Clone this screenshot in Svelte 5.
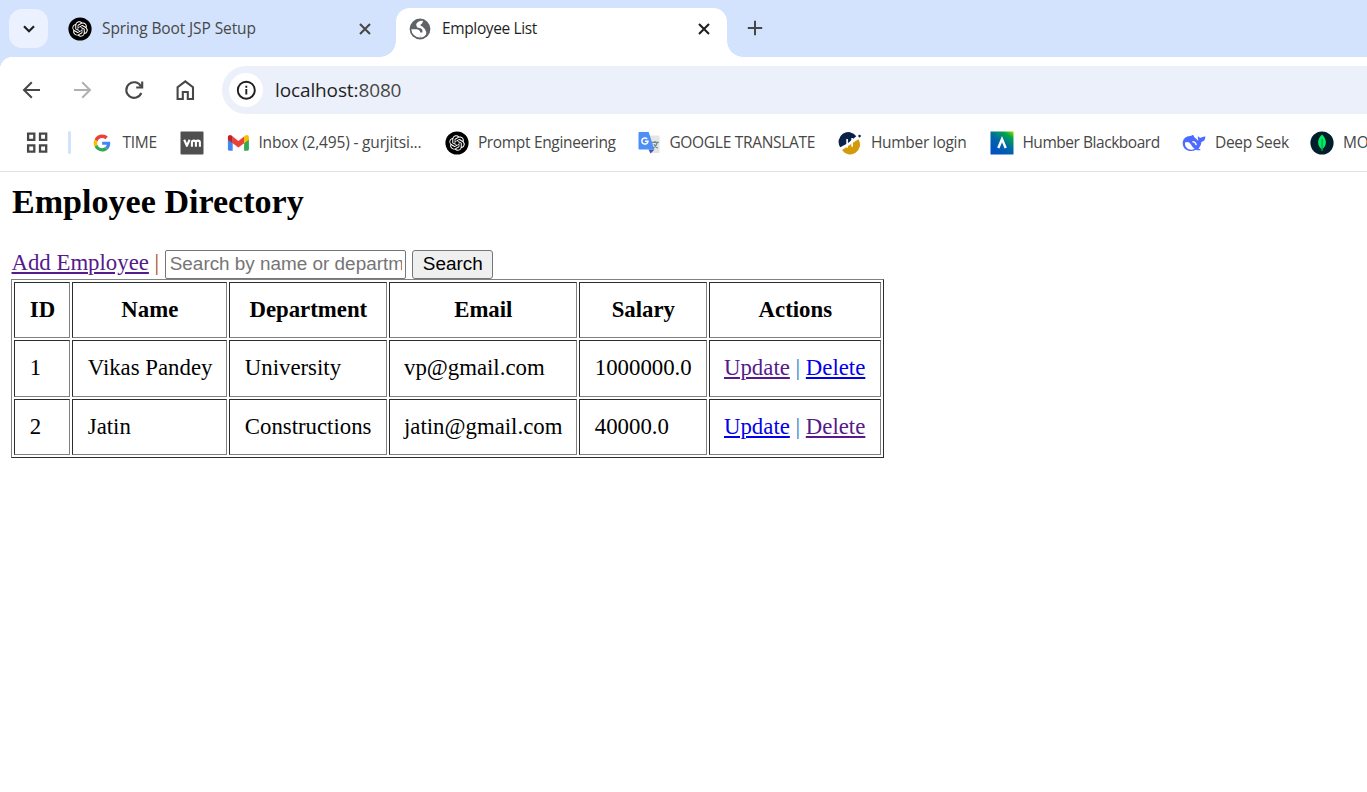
<script>
  const bookmarks = [
    { icon: 'google', label: 'TIME', width: 90.5, spacing: -0.2 },
    { icon: 'vm', label: '', width: 45.5, spacing: 0 },
    { icon: 'gmail', label: 'Inbox (2,495) - gurjitsi...', width: 219.5, spacing: -0.17 },
    { icon: 'openai', label: 'Prompt Engineering', width: 191.5, spacing: -0.34 },
    { icon: 'translate', label: 'GOOGLE TRANSLATE', width: 201.5, spacing: -0.3 },
    { icon: 'humber', label: 'Humber login', width: 151.5, spacing: -0.28 },
    { icon: 'blackboard', label: 'Humber Blackboard', width: 192.5, spacing: -0.46 },
    { icon: 'deepseek', label: 'Deep Seek', width: 128, spacing: -0.25 },
    { icon: 'mongo', label: 'MO', width: 130, spacing: -0.2 }
  ];
  const columns = [
    { name: 'ID', width: 56 },
    { name: 'Name', width: 155 },
    { name: 'Department', width: 158 },
    { name: 'Email', width: 188 },
    { name: 'Salary', width: 128 },
    { name: 'Actions', width: 172 }
  ];
  const employees = [
    { id: 1, name: 'Vikas Pandey', department: 'University', email: 'vp@gmail.com', salary: '1000000.0', seen: 'update' },
    { id: 2, name: 'Jatin', department: 'Constructions', email: 'jatin@gmail.com', salary: '40000.0', seen: 'delete' }
  ];
</script>

{#snippet openai()}
  <svg width="24" height="24" viewBox="0 0 24 24">
    <circle cx="12" cy="12" r="11.6" fill="#000" />
    <path transform="translate(4.2 4.2) scale(.65)" fill="#fff" d="M22.2819 9.8211a5.9847 5.9847 0 0 0-.5157-4.9108 6.0462 6.0462 0 0 0-6.5098-2.9A6.0651 6.0651 0 0 0 4.9807 4.1818a5.9847 5.9847 0 0 0-3.9977 2.9 6.0462 6.0462 0 0 0 .7427 7.0966 5.98 5.98 0 0 0 .511 4.9107 6.051 6.051 0 0 0 6.5146 2.9001A5.9847 5.9847 0 0 0 13.2599 24a6.0557 6.0557 0 0 0 5.7718-4.2058 5.9894 5.9894 0 0 0 3.9977-2.9001 6.0557 6.0557 0 0 0-.7475-7.0729zm-9.022 12.6081a4.4755 4.4755 0 0 1-2.8764-1.0408l.1419-.0804 4.7783-2.7582a.7948.7948 0 0 0 .3927-.6813v-6.7369l2.02 1.1686a.071.071 0 0 1 .038.052v5.5826a4.504 4.504 0 0 1-4.4945 4.4944zm-9.6607-4.1254a4.4708 4.4708 0 0 1-.5346-3.0137l.142.0852 4.783 2.7582a.7712.7712 0 0 0 .7806 0l5.8428-3.3685v2.3324a.0804.0804 0 0 1-.0332.0615L9.74 19.9502a4.4992 4.4992 0 0 1-6.1408-1.6464zM2.3408 7.8956a4.485 4.485 0 0 1 2.3655-1.9728V11.6a.7664.7664 0 0 0 .3879.6765l5.8144 3.3543-2.0201 1.1685a.0757.0757 0 0 1-.071 0l-4.8303-2.7865A4.504 4.504 0 0 1 2.3408 7.872zm16.5963 3.8558L13.1038 8.364 15.1192 7.2a.0757.0757 0 0 1 .071 0l4.8303 2.7913a4.4944 4.4944 0 0 1-.6765 8.1042v-5.6772a.79.79 0 0 0-.407-.667zm2.0107-3.0231l-.142-.0852-4.7735-2.7818a.7759.7759 0 0 0-.7854 0L9.409 9.2297V6.8974a.0662.0662 0 0 1 .0284-.0615l4.8303-2.7866a4.4992 4.4992 0 0 1 6.6802 4.66zM8.3065 12.863l-2.02-1.1638a.0804.0804 0 0 1-.038-.0567V6.0742a4.4992 4.4992 0 0 1 7.3757-3.4537l-.142.0805L8.704 5.459a.7948.7948 0 0 0-.3927.6813zm1.0976-2.3654l2.602-1.4998 2.6069 1.4998v2.9994l-2.5974 1.4997-2.6067-1.4997Z" />
  </svg>
{/snippet}

{#snippet cross(color)}
  <svg width="12" height="12" viewBox="0 0 12 12"><path d="M1 1l10 10M11 1L1 11" stroke={color} stroke-width="2.1" /></svg>
{/snippet}

{#snippet bookmarkIcon(name)}
  {#if name === 'openai'}
    {@render openai()}
  {:else}
    <svg width="24" height="24" viewBox="0 0 24 24">
      {#if name === 'google'}
        <g transform="translate(3.7 3.6) scale(.352)">
          <path fill="#EA4335" d="M24 9.5c3.54 0 6.71 1.22 9.21 3.6l6.85-6.85C35.9 2.38 30.47 0 24 0 14.62 0 6.51 5.38 2.56 13.22l7.98 6.19C12.43 13.72 17.74 9.5 24 9.5z" />
          <path fill="#4285F4" d="M46.98 24.55c0-1.57-.15-3.09-.38-4.55H24v9.02h12.94c-.58 2.96-2.26 5.48-4.78 7.18l7.73 6c4.51-4.18 7.09-10.36 7.09-17.65z" />
          <path fill="#FBBC05" d="M10.53 28.59c-.48-1.45-.76-2.99-.76-4.59s.27-3.14.76-4.59l-7.98-6.19C.92 16.46 0 20.12 0 24c0 3.88.92 7.54 2.56 10.78l7.97-6.19z" />
          <path fill="#34A853" d="M24 48c6.48 0 11.93-2.13 15.89-5.81l-7.73-6c-2.15 1.45-4.92 2.3-8.16 2.3-6.26 0-11.57-4.22-13.47-9.91l-7.98 6.19C6.51 42.62 14.62 48 24 48z" />
        </g>
      {:else if name === 'vm'}
        <rect x=".5" y=".5" width="23" height="23" rx="1" fill="#4f4f4f" />
        <path d="M4.2 8.8l2.7 6 2.7-6M11.9 15.7v-4.1q0-2 2-2t2 2v4.1m0-4.1q0-2 2-2t2 2v4.1" fill="none" stroke="#fff" stroke-width="2.1" stroke-linejoin="round" />
      {:else if name === 'gmail'}
        <path fill="#4285F4" d="M1.9 8v10.3c0 .9.6 1.4 1.4 1.4h3.4V11.5z" />
        <path fill="#34A853" d="M18.1 11.5v8.2h3.4c.8 0 1.4-.5 1.4-1.4V8z" />
        <path fill="#EA4335" d="M6.7 5.6l5.7 4.3 5.7-4.3V12.2l-5.7 4.2-5.7-4.2z" />
        <path fill="#C5221F" d="M1.9 8.7V6.3C1.9 4 4.2 3.5 5.6 4.6L6.7 5.5v6.7z" />
        <path fill="#FBBC04" d="M18.1 5.5l1.2-.9c1.6-1.2 3.6-.3 3.6 1.7v2.4l-4.8 3.5z" />
      {:else if name === 'translate'}
        <path fill="#e5e5e5" d="M10 4.5h11.6c.6 0 1 .4 1 1V21c0 .6-.4 1-1 1H13z" />
        <path fill="#4352b8" d="M11.5 18.5h6L13.6 22.6z" />
        <path fill="#4d8ff5" d="M2.5 1h9.2l5.6 17.5H2.8c-.8 0-1.3-.5-1.3-1.3V2c0-.6.4-1 1-1z" />
        <path d="M10.2 7.9a3.1 3.1 0 1 0 .8 2.4H8" fill="none" stroke="#fff" stroke-width="1.5" />
        <path d="M14.6 11.3h7.2M18 10v1.3m2.3 0c-.6 2.8-2.2 4.7-4.1 6m.8-4c.8 1.7 2 3 3.7 4" fill="none" stroke="#6d8790" stroke-width="1.3" />
      {:else if name === 'humber'}
        <g transform="translate(1 1.2) scale(.91)">
          <path fill="#0b2147" d="M1.4 16.5A10.1 10.1 0 0 1 19 4.5L10 12z" />
          <path fill="#d39a0b" d="M3.3 19.6L21.3 7.7A10.1 10.1 0 0 1 3.3 19.6z" />
          <path d="M1.6 18.8Q9 14 20.9 5.3" fill="none" stroke="#fff" stroke-width="1.3" />
          <path d="M8.9 7.5v9.5M14.4 6.5v9.5" stroke="#fff" stroke-width="1.8" />
          <circle cx="22.6" cy="4.3" r="1.4" fill="#0b2147" />
        </g>
      {:else if name === 'blackboard'}
        <defs>
          <linearGradient id="bb" x1="1" y1="0" x2=".35" y2=".9">
            <stop offset="0" stop-color="#a6d900" /><stop offset=".24" stop-color="#00a64a" /><stop offset=".62" stop-color="#0067a8" /><stop offset="1" stop-color="#0054bd" />
          </linearGradient>
        </defs>
        <rect x=".5" y=".5" width="23" height="23" fill="url(#bb)" />
        <path d="M8.3 17l3.7-8.8L15.7 17" fill="none" stroke="#fff" stroke-width="2.4" />
      {:else if name === 'deepseek'}
        <path fill="#4d6bfe" d="M.7 12.3c0-4.6 3.7-7.6 7.7-7.4 1.2 0 1.4-.8 2.4-.8 1.3 0 .6 1.4 1.8 2.4 1.3 1 2.6 1.9 3.4 3.3 1-.6-.8-2.7 0-4.7.8 1.4 1.7 2 3 1.6 1.4-.4 2.3-1.4 4.4-1.1-.1 3-1.2 5-4 5.5-.3 3.2-1.4 4.8-2.9 6.4 1 .7 1.4.6 2.2 1-1.4 1.3-3.4.8-4.6.2C8.3 22 .7 19.2.7 12.3z" />
        <path fill="#fff" d="M3 11.6c2.5-1.3 4.8-.2 6.3 2.3 1.1 1.8 1.9 3 3.4 3.8C8.8 20.6 2.3 17.6 3 11.6z" />
        <path d="M10.4 10.6q3 .2 3.9 3.5" fill="none" stroke="#fff" stroke-width="1.3" />
      {:else if name === 'mongo'}
        <circle cx="12" cy="12" r="11.6" fill="#001e2b" />
        <path fill="#00ed64" d="M12 3.6c2.8 3 3.9 5.2 3.9 8 0 3-1.6 5-3.3 6.4L12.3 20h-.6l-.3-2C9.7 16.6 8.1 14.6 8.1 11.6c0-2.8 1.1-5 3.9-8z" />
        <path d="M12.1 8v12" stroke="#00843d" stroke-width=".9" />
      {/if}
    </svg>
  {/if}
{/snippet}

<div class="window">
  <div class="tabstrip">
    <div class="tabsearch">
      <svg width="12" height="8" viewBox="0 0 12 8"><path d="M1 1.3l5 4.9 5-4.9" fill="none" stroke="#1f1f1f" stroke-width="2.2" /></svg>
    </div>
    <div class="tab idle">
      {@render openai()}
      <span class="title first">Spring Boot JSP Setup</span>
      {@render cross('#474747')}
    </div>
    <div class="tab active">
      <svg width="22" height="22" viewBox="0 0 22 22">
        <circle cx="11" cy="11" r="10.4" fill="#5f6368" />
        <path fill="#fff" d="M2.3 11.3H7.5C9.6 11.3 11.3 12.6 11.3 14.6H14.2C14.2 17.2 11.6 17 11.4 19.6A8.7 8.7 0 0 1 2.3 11.3z" />
        <path fill="#fff" d="M14.2 3C11.6 2 9.6 3.2 8.9 4.3 7.2 5 6.6 7.2 8 8.9 9.300 10.100 11 9.700 12.100 10.600 13.400 11.600 13.600 12.400 13.400 14.500L11.400 19.600C14.500 19.500 16.900 17.500 17.300 15.200 17.500 13.200 16.200 12.900 16 11 14.700 10.700 14.500 8.700 12.800 8.200 11 7.700 11.200 6.300 12.400 5.900 13.700 5.500 13.300 4.100 14.200 3z" />
      </svg>
      <span class="title second">Employee List</span>
      {@render cross('#1f1f1f')}
    </div>
    <svg class="plus" width="16" height="16" viewBox="0 0 16 16"><path d="M8 .8v14.4M.8 8h14.4" stroke="#474747" stroke-width="2" /></svg>
  </div>

  <div class="toolbar">
    <div class="nav">
      <svg width="24" height="24" viewBox="0 0 24 24"><path d="M20 12H4M11.800 4.200L4 12l7.800 7.800" fill="none" stroke="#474747" stroke-width="2" /></svg>
      <svg width="24" height="24" viewBox="0 0 24 24"><path d="M3 12H19M11.200 4.200L19 12l-7.800 7.800" fill="none" stroke="#aeb0b2" stroke-width="2" /></svg>
      <svg width="24" height="24" viewBox="0 0 24 24"><path d="M19.300 15A7.800 7.800 0 1 1 18.900 8.200M20.200 3.500V9.500H14.200" fill="none" stroke="#474747" stroke-width="2.1" /></svg>
      <svg width="24" height="24" viewBox="0 0 24 24"><path d="M4.600 21V9.200L12.300 3.300l7.700 5.900V21H14.800V14H9.800v7z" fill="none" stroke="#474747" stroke-width="2.1" /></svg>
    </div>
    <div class="omnibox">
      <div class="info">
        <svg width="20" height="20" viewBox="0 0 20 20"><circle cx="10.3" cy="10.2" r="8.5" fill="none" stroke="#1f1f1f" stroke-width="1.9" /><path d="M10.3 9v5.4M10.3 5.800v1.900" stroke="#1f1f1f" stroke-width="1.9" /></svg>
      </div>
      <span class="url">localhost:<i>8080</i></span>
    </div>
  </div>

  <div class="bookmarks">
    <svg class="apps" width="22" height="22" viewBox="0 0 22 22"><path d="M2.100 1.600h6.200v6.200h-6.200zM14 1.600h6.200v6.200h-6.200zM2.100 13.400h6.200v6.200h-6.200zM14 13.400h6.200v6.200h-6.200z" fill="none" stroke="#474747" stroke-width="2.3" /></svg>
    <div class="divider"></div>
    {#each bookmarks as b}
      <div class="bookmark" style="width: {b.width}px">
        {@render bookmarkIcon(b.icon)}
        {#if b.label}<span style="letter-spacing: {b.spacing}px">{b.label}</span>{/if}
      </div>
    {/each}
  </div>

  <main>
    <h2>Employee Directory</h2>
    <form onsubmit={(e) => e.preventDefault()}>
      <a class="visited" href="#add">Add Employee</a>
      <span class="pipe warm">|</span>
      <input type="text" placeholder="Search by name or department" />
      <button type="submit">Search</button>
    </form>
    <table>
      <colgroup>{#each columns as c}<col style="width: {c.width}px" />{/each}</colgroup>
      <thead>
        <tr>{#each columns as c}<th>{c.name}</th>{/each}</tr>
      </thead>
      <tbody>
        {#each employees as e}
          <tr>
            <td>{e.id}</td>
            <td>{e.name}</td>
            <td>{e.department}</td>
            <td>{e.email}</td>
            <td>{e.salary}</td>
            <td>
              <a class:visited={e.seen === 'update'} href="#update">Update</a>
              <span class="pipe">|</span>
              <a class:visited={e.seen === 'delete'} href="#delete">Delete</a>
            </td>
          </tr>
        {/each}
      </tbody>
    </table>
  </main>
</div>

<style>
  :global(body) { margin: 0; background: #fff; }
  .window { width: 1367px; height: 792px; overflow: hidden; background: #fff; font-family: "Open Sans", sans-serif; }
  svg { display: block; flex: none; }
  .tabstrip { display: flex; height: 57px; background: #d3e3fd; box-sizing: border-box; padding-left: 9px; }
  .tabsearch { width: 39px; height: 39px; margin-top: 9px; border-radius: 13px; background: #ebf1fe; display: flex; align-items: center; justify-content: center; padding-left: 1px; box-sizing: border-box; }
  .tab { display: flex; align-items: center; box-sizing: border-box; margin-top: 8px; height: 49px; padding-bottom: 8px; }
  .idle { width: 348px; padding-left: 19.5px; }
  .active { width: 331px; padding-left: 12.5px; background: #fff; border-radius: 14px 14px 0 0; position: relative; }
  .active::before, .active::after { content: ""; position: absolute; bottom: 0; width: 16px; height: 16px; }
  .active::before { left: -16px; background: radial-gradient(circle at 0 0, transparent 15.5px, #fff 16px); }
  .active::after { right: -16px; background: radial-gradient(circle at 100% 0, transparent 15.5px, #fff 16px); }
  .title { font-size: 15.5px; line-height: 22px; margin-top: -1px; white-space: nowrap; }
  .first { width: 257px; margin-left: 10.5px; color: #474747; letter-spacing: -.11px; }
  .second { width: 256px; margin-left: 11.5px; color: #1f1f1f; letter-spacing: -.37px; }
  .plus { margin: 20px 0 0 20px; }
  .toolbar { height: 57px; display: flex; box-sizing: border-box; padding: 9px 0 0 20px; background: radial-gradient(circle at 12px 12px, #fff 11.7px, #d3e3fd 12.2px) 0 0 / 12px 12px no-repeat; }
  .nav { display: flex; gap: 27px; align-items: center; width: 202px; height: 48px; }
  .omnibox { flex: 1; height: 48px; border-radius: 24px 0 0 24px; background: #ecf0fa; display: flex; align-items: center; padding-left: 7px; }
  .info { width: 34px; height: 34px; border-radius: 50%; background: #fff; display: flex; align-items: center; justify-content: center; }
  .url { margin-left: 12px; font-size: 19px; line-height: 28px; letter-spacing: -.12px; color: #1f1f1f; }
  .url i { font-style: normal; color: #474747; }
  .bookmarks { height: 58px; box-sizing: border-box; border-bottom: 1px solid #dfe1e3; display: flex; align-items: center; padding-left: 26px; overflow: hidden; }
  .apps { margin-right: 20px; }
  .divider { flex: none; width: 3px; height: 23px; background: #d3e3fd; border-radius: 2px; margin-right: 18.9px; }
  .bookmark { flex: none; display: flex; align-items: center; gap: 8.5px; font-size: 15.5px; line-height: 22px; color: #474747; white-space: nowrap; }
  .bookmark span { margin-top: -1px; }
  main { padding: 9px 0 0 11px; font-family: "Liberation Serif", serif; font-size: 22.8px; color: #000; }
  h2 { font-size: 34.1px; line-height: 40px; margin: 1px 0 0 1px; }
  form { display: flex; align-items: flex-start; height: 29px; margin-top: 28px; padding-left: .5px; box-sizing: border-box; line-height: 26px; white-space: nowrap; }
  a { color: #0000ee; text-decoration: underline; }
  a.visited { color: #551a8b; }
  .pipe { color: #1b78c8; }
  .warm { color: #a84810; margin: 0 6.3px 0 5.5px; }
  input { width: 241px; height: 29px; box-sizing: border-box; border: 1px solid #767676; border-radius: 2px; padding: 0 3px 2px 3.5px; font: 18.9px "Liberation Sans", sans-serif; outline: none; background: #fff; }
  input::placeholder { color: #757575; opacity: 1; }
  button { width: 81px; height: 29px; margin-left: 6px; box-sizing: border-box; border: 1px solid #767676; border-radius: 3px; background: #efefef; color: #000; padding: 0 0 2px; font: 18.9px "Liberation Sans", sans-serif; }
  table { table-layout: fixed; width: 873px; box-sizing: border-box; border-collapse: separate; border-spacing: 2px; border: 1px solid; border-color: #808080 #2c2c2c #2c2c2c #808080; line-height: 26px; }
  th, td { box-sizing: border-box; height: 56px; padding: 0 14.2px 1px 14.8px; border: 1px solid; border-color: #2c2c2c #808080 #808080 #2c2c2c; white-space: nowrap; text-align: left; }
  th { text-align: center; }
  td:nth-child(4), td:nth-child(6) { padding-left: 14px; }
  tbody tr:first-child td { height: 57px; }
</style>
